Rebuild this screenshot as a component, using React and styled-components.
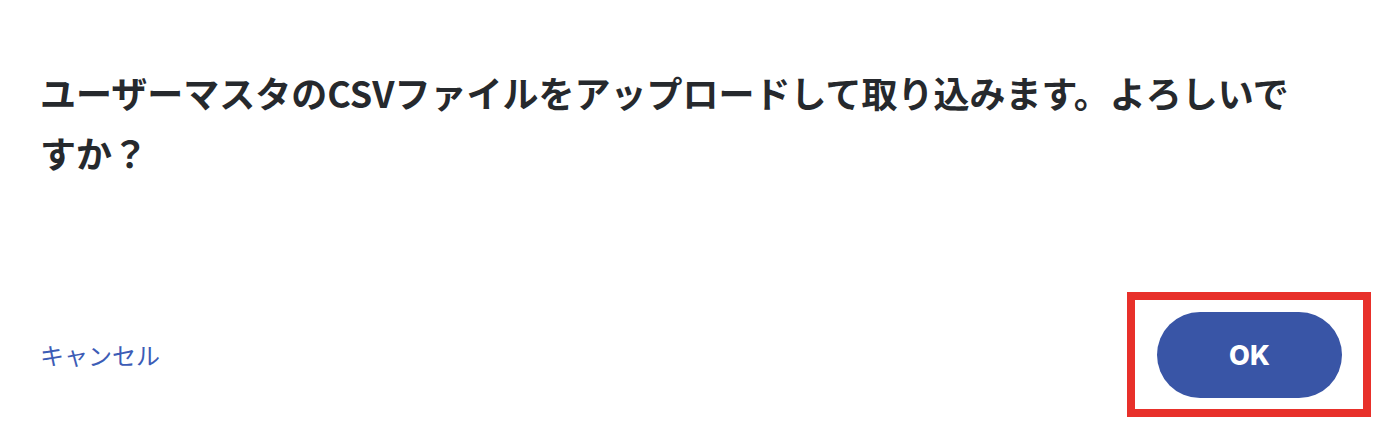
import React from "react";
import styled, { createGlobalStyle } from "styled-components";

const Global = createGlobalStyle`
  html, body { margin: 0; padding: 0; background: #ffffff; }
  body { font-family: "Noto Sans CJK JP", "Noto Sans", sans-serif; }
`;

const Dialog = styled.div`
  width: 1392px;
  height: 438px;
  box-sizing: border-box;
  padding: 62px 21px 0 40px;
  display: flex;
  flex-direction: column;
  background: #ffffff;
`;

const Message = styled.p`
  margin: 0;
  width: 1270px;
  font-size: 36px;
  line-height: 60px;
  font-weight: 700;
  color: #26292d;
  letter-spacing: 0;
`;

const Footer = styled.div`
  margin-top: 110px;
  display: flex;
  align-items: center;
  justify-content: space-between;
`;

const CancelLink = styled.button`
  border: none;
  background: none;
  padding: 0;
  font-family: "Noto Sans CJK JP", sans-serif;
  font-size: 24px;
  font-weight: 400;
  color: #3c5cb6;
  cursor: pointer;
`;

const Highlight = styled.div`
  border: 8px solid #e8302a;
  padding: 12px 21px 11px 22px;
  display: flex;
`;

const OkButton = styled.button`
  width: 185px;
  height: 86px;
  border: none;
  border-radius: 43px;
  background: #3955a6;
  color: #ffffff;
  font-family: "Inter", "Roboto", sans-serif;
  font-size: 27px;
  font-weight: 800;
  cursor: pointer;
`;

export default function App() {
  return (
    <>
      <Global />
      <Dialog>
        <Message>
          ユーザーマスタのCSVファイルをアップロードして取り込みます。よろしいですか？
        </Message>
        <Footer>
          <CancelLink>キャンセル</CancelLink>
          <Highlight>
            <OkButton>OK</OkButton>
          </Highlight>
        </Footer>
      </Dialog>
    </>
  );
}
